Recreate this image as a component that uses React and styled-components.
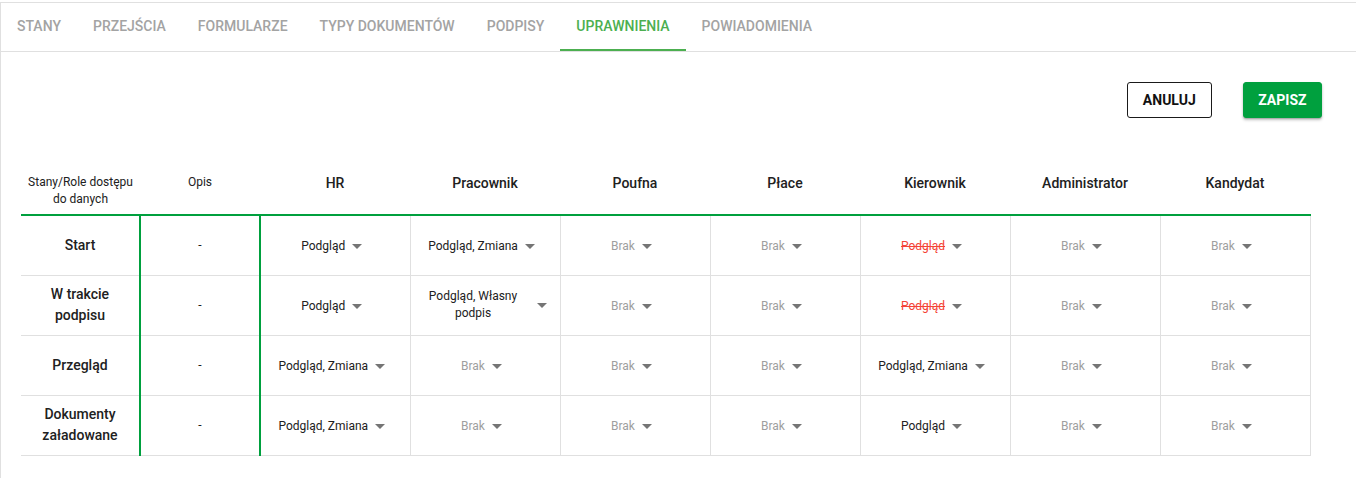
import React from "react";
import styled, { createGlobalStyle } from "styled-components";

const GlobalStyle = createGlobalStyle`
  html, body { margin: 0; padding: 0; background: #fff; }
  body { font-family: Roboto, "Liberation Sans", Arial, sans-serif; color: #212121; }
  * { box-sizing: border-box; }
`;

const Card = styled.div`
  margin-top: 2px;
  min-height: calc(100vh - 2px);
  border-top: 1px solid #e0e0e0;
  border-left: 1px solid #e0e0e0;
  background: #fff;
`;

const TabBar = styled.nav`
  display: flex;
  border-bottom: 1px solid #e0e0e0;
`;

const Tab = styled.div`
  height: 48px;
  padding: 0 16px;
  display: flex;
  align-items: center;
  font-size: 14px;
  font-weight: 500;
  text-transform: uppercase;
  color: ${(p) => (p.$active ? "#4caf50" : "#a3a3a3")};
  border-bottom: 2px solid ${(p) => (p.$active ? "#4caf50" : "transparent")};
  cursor: pointer;
`;

const Content = styled.div`
  padding: 30px 34px 20px 20px;
`;

const Actions = styled.div`
  display: flex;
  justify-content: flex-end;
  gap: 31px;
`;

const Button = styled.button`
  height: 36px;
  padding: ${(p) => (p.$primary ? "0 14.5px" : "0 15px")};
  border-radius: 3px;
  font-family: Roboto, "Liberation Sans", Arial, sans-serif;
  font-size: 14px;
  font-weight: 700;
  text-transform: uppercase;
  cursor: pointer;
  border: 1px solid ${(p) => (p.$primary ? "#00a03e" : "#1a1a1a")};
  background: ${(p) => (p.$primary ? "#00a03e" : "#fff")};
  color: ${(p) => (p.$primary ? "#fff" : "#111")};
  box-shadow: ${(p) =>
    p.$primary ? "0 2px 3px rgba(0,0,0,0.25), 0 1px 1px rgba(0,0,0,0.14)" : "none"};
`;

const Table = styled.table`
  margin-top: 47px;
  border-collapse: collapse;
  table-layout: fixed;
  width: 1289px;
`;

const HeadCell = styled.th`
  vertical-align: top;
  text-align: center;
  padding: ${(p) => (p.$small ? "9px 4px 6px" : "8px 4px 6px")};
  border-bottom: 2px solid #00a03e;
  font-size: ${(p) => (p.$small ? "12px" : "14px")};
  font-weight: ${(p) => (p.$small ? 400 : 500)};
  line-height: ${(p) => (p.$small ? "17px" : "20px")};
  color: #212121;
`;

const Row = styled.tr`
  height: 60px;
`;

const StateCell = styled.td`
  padding: 0 16px;
  text-align: center;
  font-size: 14px;
  font-weight: 500;
  line-height: 21px;
  border-bottom: 1px solid #e0e0e0;
  border-right: 2px solid #00a03e;
`;

const DescCell = styled.td`
  text-align: center;
  font-size: 12px;
  border-bottom: 1px solid #e0e0e0;
  border-right: 2px solid #00a03e;
`;

const ValueCell = styled.td`
  padding: 0 6px;
  text-align: center;
  border-bottom: 1px solid #e0e0e0;
  border-right: 1px solid #e0e0e0;
`;

const Select = styled.div`
  display: inline-flex;
  align-items: center;
  max-width: 100%;
  vertical-align: middle;
  cursor: pointer;
`;

const SelectText = styled.span`
  max-width: 114px;
  font-size: 12px;
  line-height: 17px;
  text-align: center;
  color: ${(p) =>
    p.$kind === "none" ? "#9e9e9e" : p.$kind === "revoked" ? "#f44336" : "#212121"};
  text-decoration: ${(p) => (p.$kind === "revoked" ? "line-through" : "none")};
`;

const ArrowBox = styled.span`
  width: 24px;
  flex: none;
  display: flex;
  align-items: center;
  padding-left: 7px;
`;

const Triangle = styled.span`
  width: 0;
  height: 0;
  border-left: 5px solid transparent;
  border-right: 5px solid transparent;
  border-top: 5px solid #757575;
`;

const tabs = [
  "Stany",
  "Przejścia",
  "Formularze",
  "Typy dokumentów",
  "Podpisy",
  "Uprawnienia",
  "Powiadomienia",
];

const roles = ["HR", "Pracownik", "Poufna", "Płace", "Kierownik", "Administrator", "Kandydat"];

const P = ["Podgląd", "value"];
const PZ = ["Podgląd, Zmiana", "value"];
const B = ["Brak", "none"];
const X = ["Podgląd", "revoked"];

const rows = [
  { name: "Start", vals: [P, PZ, B, B, X, B, B] },
  { name: "W trakcie podpisu", vals: [P, ["Podgląd, Własny podpis", "value"], B, B, X, B, B] },
  { name: "Przegląd", vals: [PZ, B, B, B, PZ, B, B] },
  { name: "Dokumenty załadowane", vals: [PZ, B, B, B, P, B, B] },
];

function PermissionSelect({ label, kind }) {
  return (
    <Select>
      <SelectText $kind={kind}>{label}</SelectText>
      <ArrowBox>
        <Triangle />
      </ArrowBox>
    </Select>
  );
}

export default function App() {
  return (
    <>
      <GlobalStyle />
      <Card>
        <TabBar>
          {tabs.map((t) => (
            <Tab key={t} $active={t === "Uprawnienia"}>
              {t}
            </Tab>
          ))}
        </TabBar>
        <Content>
          <Actions>
            <Button>Anuluj</Button>
            <Button $primary>Zapisz</Button>
          </Actions>
          <Table>
            <colgroup>
              <col style={{ width: 119 }} />
              <col style={{ width: 120 }} />
              {roles.map((r) => (
                <col key={r} style={{ width: 150 }} />
              ))}
            </colgroup>
            <thead>
              <tr>
                <HeadCell $small>Stany/Role dostępu do danych</HeadCell>
                <HeadCell $small>Opis</HeadCell>
                {roles.map((r) => (
                  <HeadCell key={r}>{r}</HeadCell>
                ))}
              </tr>
            </thead>
            <tbody>
              {rows.map((row) => (
                <Row key={row.name}>
                  <StateCell>{row.name}</StateCell>
                  <DescCell>-</DescCell>
                  {row.vals.map(([label, kind], i) => (
                    <ValueCell key={i}>
                      <PermissionSelect label={label} kind={kind} />
                    </ValueCell>
                  ))}
                </Row>
              ))}
            </tbody>
          </Table>
        </Content>
      </Card>
    </>
  );
}
